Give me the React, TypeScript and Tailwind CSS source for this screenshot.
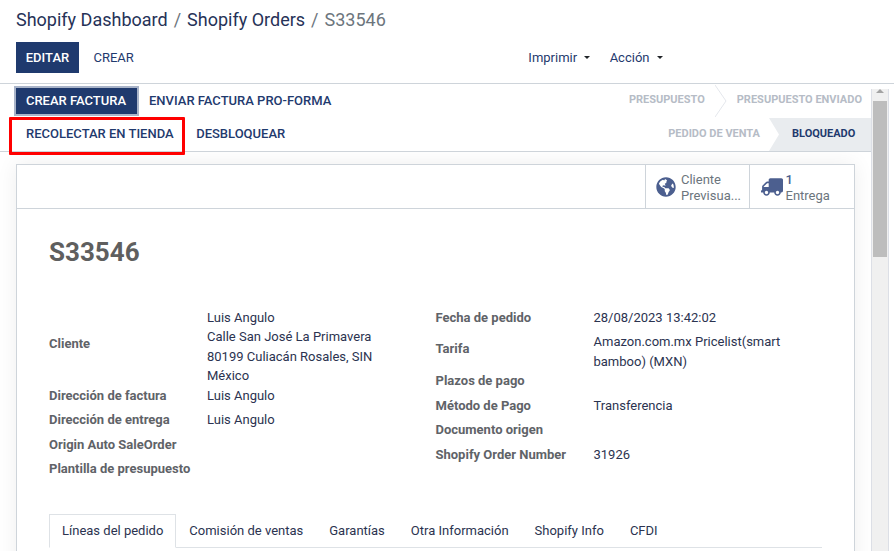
import { FaGlobeAmericas, FaTruck } from "react-icons/fa";

const LEFT_ROWS = [
  { label: "Dirección de factura", value: "Luis Angulo", gap: "mt-[0.7px]" },
  { label: "Dirección de entrega", value: "Luis Angulo", gap: "mt-[4.8px]" },
  { label: "Origin Auto SaleOrder", value: "", gap: "mt-[5.2px]" },
  { label: "Plantilla de presupuesto", value: "", gap: "mt-[4.4px]" },
];

const TABS = ["Comisión de ventas", "Garantías", "Otra Información", "Shopify Info", "CFDI"];

function Caret() {
  return <span className="ml-[7px] inline-block h-0 w-0 border-x-[3.5px] border-t-[3.5px] border-x-transparent border-t-[#212529] align-[3px]" />;
}

export default function App() {
  return (
    <div className="flex h-[551px] w-[894px] flex-col overflow-hidden bg-white font-['Roboto',sans-serif] text-[13px] text-[#2b3350]">
      {/* control panel */}
      <div className="h-[84px] shrink-0 border-b border-[#ced4da] px-[16px] pt-[7px]">
        <div className="flex h-[25px] items-center text-[18px] leading-[25px] text-[#263257]">
          <span>Shopify Dashboard</span>
          <span className="mx-[6px] text-[#6c757d]">/</span>
          <span>Shopify Orders</span>
          <span className="mx-[6px] text-[#6c757d]">/</span>
          <span className="text-[#6c757d]">S33546</span>
        </div>
        <div className="mt-[10px] flex items-center">
          <button className="h-[31px] w-[63px] bg-[#1f3a6e] text-[13px] font-medium text-white">EDITAR</button>
          <button className="ml-[14.5px] text-[13px] text-[#1f3a6e]">CREAR</button>
          <div className="ml-[394.5px] flex items-center text-[#1f3a6e]">
            <span>Imprimir<Caret /></span>
            <span className="ml-[19.5px]">Acción<Caret /></span>
          </div>
        </div>
      </div>

      <div className="flex min-h-0 flex-1">
        <div className="min-w-0 flex-1">
          {/* status bar */}
          <div className="relative h-[68px] border-b border-[#ced4da]">
            <div className="flex h-[34px] items-center justify-between pl-[16px] pr-[9px]">
              <div className="flex items-center">
                <button className="h-[26px] w-[121px] bg-[#1f3a6e] pr-[1px] text-[13px] font-medium text-white outline-[2px] outline-[#a9b4c9]">CREAR FACTURA</button>
                <span className="ml-[12px] font-medium text-[#1f3a6e]">ENVIAR FACTURA PRO-FORMA</span>
              </div>
              <div className="flex items-center pb-[1px] text-[11px] font-bold text-[#b6bcc6]">
                <span>PRESUPUESTO</span>
                <svg width="12" height="32" viewBox="0 0 12 32" className="mx-[10px]">
                  <path d="M0 0 L11 16 L0 32" fill="none" stroke="#e4e7ec" />
                </svg>
                <span>PRESUPUESTO ENVIADO</span>
              </div>
            </div>
            <div className="flex h-[33px] items-center justify-between pl-[26px]">
              <div className="flex items-center pb-[1px]">
                <span className="font-medium text-[#1f3a6e]">RECOLECTAR EN TIENDA</span>
                <span className="ml-[22.5px] font-medium text-[#1f3a6e]">DESBLOQUEAR</span>
              </div>
              <div className="flex h-full items-center text-[11px] font-bold">
                <span className="mr-[9px] text-[#b6bcc6]">PEDIDO DE VENTA</span>
                <div className="flex h-full w-[102px] items-center bg-[#e9ecef] pl-[23px] text-[#1f3a6e] [clip-path:polygon(0_0,100%_0,100%_100%,0_100%,10px_50%)]">BLOQUEADO</div>
              </div>
            </div>
            <div className="absolute left-[9px] top-[33px] h-[38px] w-[176px] rounded-[1px] border-[3px] border-[#ff0000]" />
          </div>

          {/* sheet */}
          <div className="h-[399px] overflow-hidden px-[16px] pt-[12px]">
            <div className="h-[420px] border border-[#ced4da] bg-white shadow-[0_0_20px_rgba(0,0,0,0.07)]">
              <div className="flex h-[44px] justify-end border-b border-[#ced4da]">
                <div className="flex w-[104px] items-center border-l border-[#ced4da] pl-[10px] text-[#6c757d]">
                  <FaGlobeAmericas className="size-[20px] shrink-0 text-[#4c5f8f]" />
                  <div className="ml-[5px] pt-[2px] leading-[16px]">Cliente<br />Previsua...</div>
                </div>
                <div className="flex w-[105px] items-center border-l border-[#ced4da] pl-[11px] text-[#6c757d]">
                  <FaTruck className="size-[22px] shrink-0 scale-x-[-1] text-[#4c5f8f]" />
                  <div className="ml-[2.5px] pt-[2px] leading-[16px]"><span className="font-medium text-[#4c5f8f]">1</span><br />Entrega</div>
                </div>
              </div>
              <div className="px-[32px]">
                <h1 className="mt-[26px] text-[26px] font-bold leading-[34px] text-[#5f5f5f]">S33546</h1>
                <div className="mt-[39px] flex">
                  <div className="w-[386.5px]">
                    <div className="flex">
                      <div className="flex w-[158px] items-center pb-[6px] font-bold text-[#5f6368]">Cliente</div>
                      <div className="w-[178px] leading-[19.3px]">Luis Angulo<br />Calle San José La Primavera<br />80199 Culiacán Rosales, SIN<br />México</div>
                    </div>
                    {LEFT_ROWS.map((row) => (
                      <div key={row.label} className={`flex h-[19.5px] items-center ${row.gap}`}>
                        <div className="w-[158px] font-bold text-[#5f6368]">{row.label}</div>
                        <div>{row.value}</div>
                      </div>
                    ))}
                  </div>
                  <div className="flex-1">
                    <div className="flex h-[19.5px] items-center"><div className="w-[158px] font-bold text-[#5f6368]">Fecha de pedido</div><div>28/08/2023 13:42:02</div></div>
                    <div className="mt-[4px] flex items-center"><div className="w-[158px] pb-[6px] font-bold text-[#5f6368]">Tarifa</div><div className="w-[200px] leading-[20px]">Amazon.com.mx Pricelist(smart bamboo) (MXN)</div></div>
                    <div className="-mt-[0.5px] flex h-[19.5px] items-center font-bold text-[#5f6368]">Plazos de pago</div>
                    <div className="mt-[5.4px] flex h-[19.5px] items-center"><div className="w-[158px] font-bold text-[#5f6368]">Método de Pago</div><div>Transferencia</div></div>
                    <div className="mt-[4.4px] flex h-[19.5px] items-center font-bold text-[#5f6368]">Documento origen</div>
                    <div className="mt-[5.4px] flex h-[19.5px] items-center"><div className="w-[158px] font-bold text-[#5f6368]">Shopify Order Number</div><div>31926</div></div>
                  </div>
                </div>
                <div className="mt-[35.7px] flex h-[34px] border-b border-[#dee2e6]">
                  <div className="h-[34px] border border-[#dee2e6] border-b-white bg-white px-[12px] leading-[32px]">Líneas del pedido</div>
                  {TABS.map((tab) => (
                    <div key={tab} className="px-[13px] leading-[34px]">{tab}</div>
                  ))}
                </div>
              </div>
            </div>
          </div>
        </div>

        {/* scrollbar */}
        <div className="w-[23px] shrink-0 bg-white">
          <div className="h-full w-[18px] border-x border-[#dcdfe6] bg-[#f0f0f0] px-[1px]">
            <div className="mx-auto mt-[5px] h-0 w-0 border-x-[4px] border-b-[4px] border-x-transparent border-b-[#a3a3a3]" />
            <div className="mt-[8px] h-[156px] bg-[#bdbdbd]" />
          </div>
        </div>
      </div>
    </div>
  );
}
